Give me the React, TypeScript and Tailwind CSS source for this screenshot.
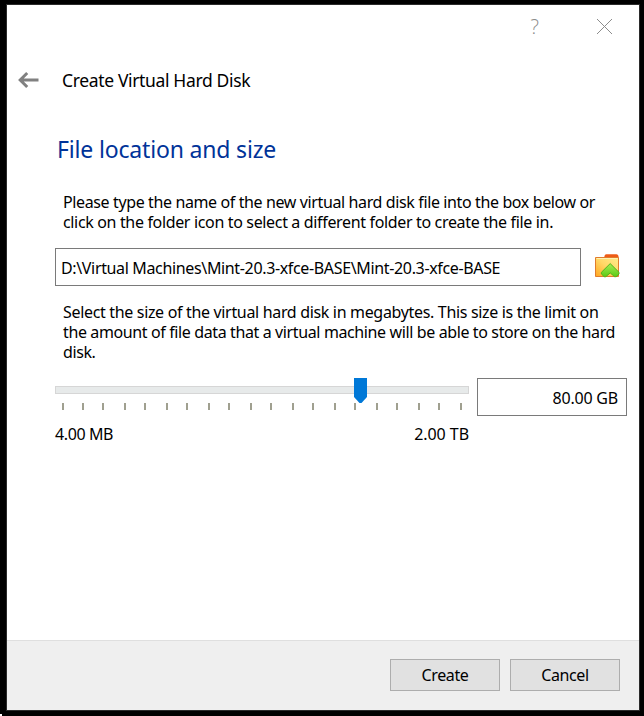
import type { ReactNode } from "react";

const TICK_GAPS = [
  "ml-[7px]", "ml-[18px]", "ml-[18px]", "ml-[20px]", "ml-[18px]", "ml-[20px]", "ml-[18px]",
  "ml-[20px]", "ml-[18px]", "ml-[20px]", "ml-[18px]", "ml-[20px]", "ml-[18px]", "ml-[20px]",
  "ml-[18px]", "ml-[20px]", "ml-[18px]", "ml-[20px]", "ml-[18px]", "ml-[20px]",
];

function Line({ className, children }: { className: string; children: ReactNode }) {
  return <span className={`block whitespace-nowrap ${className}`}>{children}</span>;
}

function FolderIcon() {
  return (
    <svg width="26" height="26" viewBox="0 0 26 26" aria-hidden="true">
      <defs>
        <linearGradient id="folder" x1="1" y1="0" x2="0" y2="1">
          <stop offset="0" stopColor="#ffed8c" />
          <stop offset="0.5" stopColor="#ffd766" />
          <stop offset="1" stopColor="#ffa51f" />
        </linearGradient>
        <linearGradient id="arrow" x1="0" y1="0" x2="0" y2="1">
          <stop offset="0" stopColor="#a4ed53" />
          <stop offset="1" stopColor="#5cca16" />
        </linearGradient>
      </defs>
      <path d="M9.5 4V2.3Q9.5 .3 11.3 .3H21.5Q23 .3 23.5 2V4Z" fill="#ee5b16" />
      <path d="M.5 3.5H23.5V22.5H.5Z" fill="url(#folder)" stroke="#e07c2c" />
      <path d="M1.5 4.5H22.5" fill="none" stroke="#fff1b0" />
      <path d="M15.2 9.6L24 18.3V20L21.2 22.7H19.6L15.2 18.9L10.8 22.7H9.2L6.4 20V18.3Z" fill="url(#arrow)" stroke="#55b31d" strokeLinejoin="round" />
    </svg>
  );
}

function PushButton({ children }: { children: ReactNode }) {
  return (
    <button className="flex h-8 w-[110px] items-center justify-center border border-[#adadad] bg-[#e1e1e1]">
      <span className="text-[16px] tracking-[-0.4px]">{children}</span>
    </button>
  );
}

export default function App() {
  return (
    <div className="flex h-[716px] w-[644px] flex-col overflow-hidden bg-black pl-1.5 pt-1 font-['Noto_Sans',sans-serif] text-[16px] leading-5 text-black">
      <main className="flex h-[707px] w-[634px] shrink-0 flex-col border border-[#2b2b2b] bg-white">
        <header className="flex h-[60px] items-start justify-end pr-[26px] pt-[13px] text-[#8c8c8c]">
          <span className="mr-[57px] font-['Open_Sans',sans-serif] text-[20px] font-light leading-[17px]">?</span>
          <svg width="17" height="17" viewBox="0 0 17 17" aria-hidden="true">
            <path d="M1 1L16 16M16 1L1 16" stroke="currentColor" />
          </svg>
        </header>

        <div className="flex h-[30px] items-center pl-[11px]">
          <svg width="22" height="18" viewBox="0 0 22 18" className="mr-[22px]" aria-hidden="true">
            <path d="M9.2 2L2.2 9L9.2 16M2.5 9H20.5" fill="none" stroke="#808080" strokeWidth="3" />
          </svg>
          <h1 className="text-[17.5px] tracking-[-0.35px]">Create Virtual Hard Disk</h1>
        </div>

        <h2 className="mt-[38px] h-[59px] pl-[50px] text-[23px] leading-[33px] tracking-[-0.17px] text-[#003399]">File location and size</h2>

        <section className="h-14 pl-14">
          <Line className="tracking-[-0.38px]">Please type the name of the new virtual hard disk file into the box below or</Line>
          <Line className="tracking-[-0.345px]">click on the folder icon to select a different folder to create the file in.</Line>
        </section>

        <div className="flex h-[38px] pl-12">
          <div className="flex w-[526px] items-center border border-[#7a7a7a] pl-[5px] pt-0.5">
            <Line className="tracking-[-0.35px]">D:\Virtual Machines\Mint-20.3-xfce-BASE\Mint-20.3-xfce-BASE</Line>
          </div>
          <div className="pl-3.5 pt-1.5"><FolderIcon /></div>
        </div>

        <section className="mt-4 h-[76px] pl-14">
          <Line className="tracking-[-0.33px]">Select the size of the virtual hard disk in megabytes. This size is the limit on</Line>
          <Line className="tracking-[-0.38px]">the amount of file data that a virtual machine will be able to store on the hard</Line>
          <Line className="tracking-[-0.4px]">disk.</Line>
        </section>

        <div className="flex pl-12">
          <div className="w-[414px]">
            <div className="relative pt-2">
              <div className="h-2 border border-[#d6d6d6] bg-[#e7eaea]" />
              <svg width="13" height="25" viewBox="0 0 13 25" className="absolute left-[299px] top-0" aria-hidden="true">
                <path d="M0 0H13V19L7.5 25H5.5L0 19Z" fill="#0078d7" />
              </svg>
            </div>
            <div className="mt-[9px] flex h-[7px]">
              {TICK_GAPS.map((gap, i) => <i key={i} className={`w-0.5 shrink-0 bg-[#a0a090] ${gap}`} />)}
            </div>
            <div className="mt-3.5 flex justify-between">
              <Line className="tracking-[-0.4px]">4.00 MB</Line>
              <Line className="tracking-[-0.05px]">2.00 TB</Line>
            </div>
          </div>
          <div className="ml-2 flex h-[38px] w-[150px] items-center justify-end border border-[#7a7a7a] pr-2 pt-0.5">
            <Line className="tracking-[-0.2px]">80.00 GB</Line>
          </div>
        </div>

        <footer className="mt-auto flex h-[70px] shrink-0 gap-2.5 border-t border-[#dfdfdf] bg-[#efefef] pl-[383px] pt-[18px]">
          <PushButton>Create</PushButton>
          <PushButton>Cancel</PushButton>
        </footer>
      </main>
      <div className="-ml-1.5 mt-[3px] h-0.5 w-0.5 shrink-0 bg-white" />
    </div>
  );
}
